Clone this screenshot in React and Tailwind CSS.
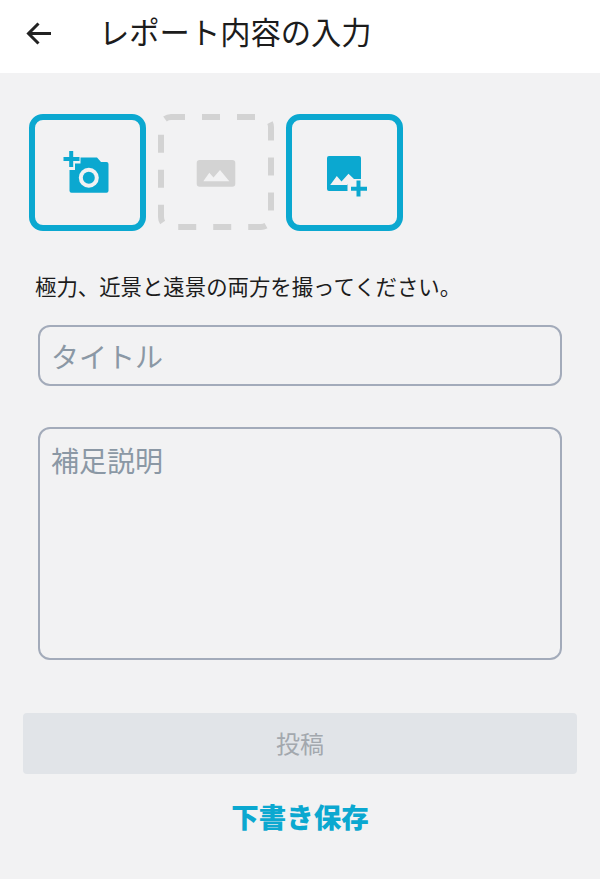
import React from 'react';

const font = { fontFamily: '"Noto Sans CJK JP", "Noto Sans", sans-serif' };

function CameraPlusIcon() {
  return (
    <svg className="mr-px" width="50" height="50" viewBox="0 0 50 50" fill="#0ba8d0">
      <path d="M7.5 22H13V15.5H18.5V9.5H35L39 14H44.5Q46.5 14 46.5 16V42.7Q46.5 44.7 44.5 44.7H9.5Q7.5 44.7 7.5 42.7Z" />
      <circle cx="26.8" cy="29.7" r="10" fill="#f2f2f3" />
      <circle cx="26.8" cy="29.7" r="6" />
      <path d="M9.2 3V19M1.5 11H17.5" stroke="#0ba8d0" strokeWidth="4" fill="none" />
    </svg>
  );
}

function ImagePlusIcon() {
  return (
    <svg className="mr-px" width="50" height="50" viewBox="0 0 50 50" fill="#0ba8d0">
      <path d="M10 8H40Q42 8 42 10V31H34V36H28.5V43H10Q8 43 8 41V10Q8 8 10 8Z" />
      <path d="M11.2 37L17.8 28L22.5 33.5L29.5 25.7L35 31H34V36H28.5V37Z" fill="#f2f2f3" />
      <path d="M39.5 32.5V48.5M32 40.7H48" stroke="#0ba8d0" strokeWidth="4" fill="none" />
    </svg>
  );
}

function ImageIcon() {
  return (
    <svg width="50" height="50" viewBox="0 0 50 50">
      <rect x="5.7" y="12" width="38.6" height="26.7" rx="3" fill="#d3d3d3" />
      <path d="M12.3 33.3L18.3 24.7L22.5 29.5L29 22L38.3 33.3Z" fill="#f2f2f3" />
    </svg>
  );
}

function Tile({ children }) {
  return (
    <button className="flex h-[117px] w-[117px] items-center justify-center rounded-[14px] border-[6px] border-[#0ba8d0]">
      {children}
    </button>
  );
}

export default function App() {
  return (
    <div className="flex min-h-screen flex-col bg-[#f2f2f3] text-[#1c1c1c]" style={font}>
      <header className="flex h-[73px] items-center bg-white pb-[6px] pl-[26px]">
        <svg width="26" height="24" viewBox="0 0 26 24" fill="none" stroke="#222" strokeWidth="3">
          <path d="M25 11.5H3M12.5 1.5L2.5 11.5L12.5 21.5" />
        </svg>
        <h1 className="mb-[4px] ml-[47px] text-[30.3px] leading-none font-normal">レポート内容の入力</h1>
      </header>

      <div className="flex gap-3 pt-[41px] pl-[29px]">
        <Tile>
          <CameraPlusIcon />
        </Tile>
        <div className="relative flex h-[117px] w-[116px] items-center justify-center">
          <svg className="absolute inset-0" width="116" height="117" viewBox="0 0 116 117" fill="none">
            <rect x="3" y="3" width="110" height="110" rx="10" stroke="#d3d3d3" strokeWidth="6" strokeDasharray="18 17" strokeDashoffset="4" />
          </svg>
          <ImageIcon />
        </div>
        <Tile>
          <ImagePlusIcon />
        </Tile>
      </div>

      <p className="mt-[39px] pl-[35px] text-[21.4px] leading-[32px]">極力、近景と遠景の両方を撮ってください。</p>

      <div className="mt-[23px] flex flex-col gap-[41px] px-[38px]">
        <input
          className="h-[61px] w-full rounded-xl border-2 border-[#a3abba] bg-transparent px-[11px] text-[28px] outline-none placeholder:text-[#8b98a5]"
          placeholder="タイトル"
        />
        <textarea
          className="h-[233px] w-full resize-none rounded-xl border-2 border-[#a3abba] bg-transparent px-[11px] py-[11px] text-[28px] leading-[40px] outline-none placeholder:text-[#8b98a5]"
          placeholder="補足説明"
        />
      </div>

      <div className="mt-[53px] px-[23px]">
        <button className="h-[61px] w-full rounded bg-[#e1e4e8] pb-[2px] text-[24px] text-[#a3a8ae]">投稿</button>
      </div>

      <button className="mt-[24px] text-[27.5px] leading-[36px] font-extrabold text-[#0ba8d0]">下書き保存</button>
    </div>
  );
}
